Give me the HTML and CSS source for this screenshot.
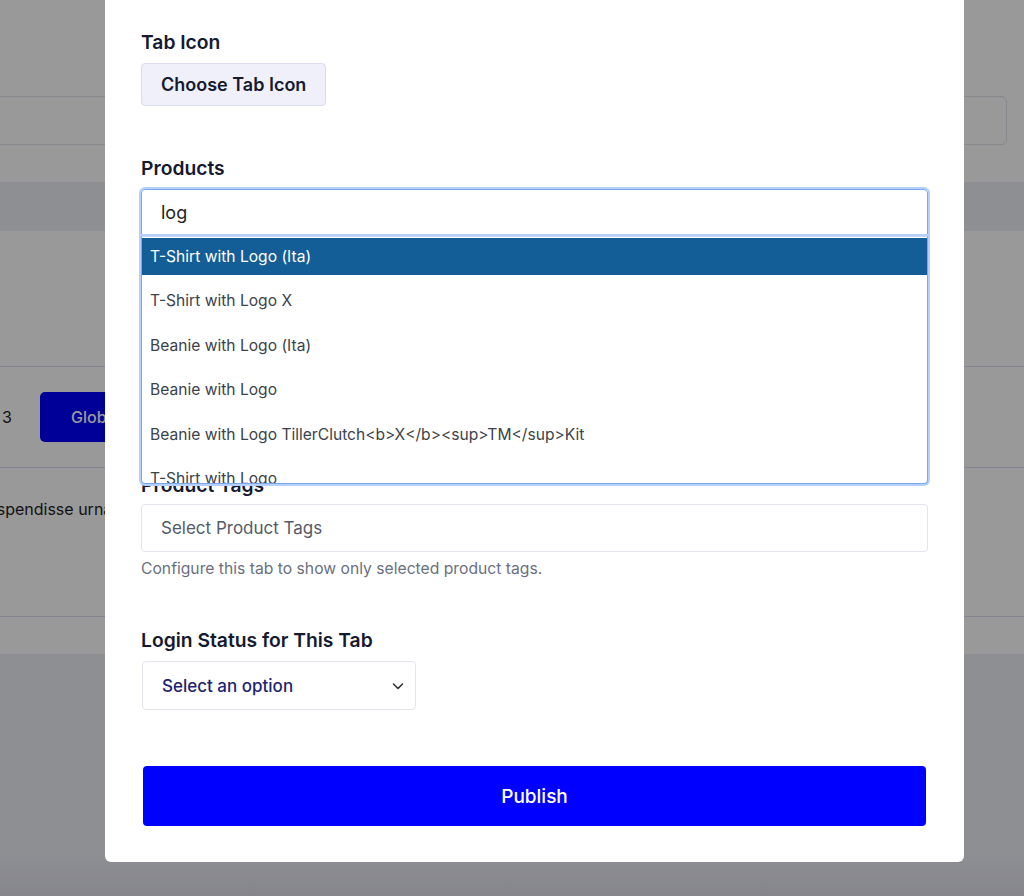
FILE: index.html
```html
<!DOCTYPE html>
<html>
<head>
<meta charset="utf-8">
<link rel="stylesheet" href="styles.css">
</head>
<body>
<div class="page">
  <div class="page-field"></div>
  <div class="page-band"></div>
  <div class="page-gap"></div>
  <div class="page-row">
    <span class="page-num">3</span>
    <span class="page-btn">Global</span>
  </div>
  <div class="page-text">Suspendisse urna nibh, viverra non, semper suscipit, posuere a, pede.</div>
  <div class="page-strip"></div>
  <div class="page-foot"></div>
</div>

<div class="overlay">
  <div class="modal">
    <div class="field">
      <div class="label">Tab Icon</div>
      <button class="icon-btn">Choose Tab Icon</button>
    </div>

    <div class="field field-products">
      <div class="label">Products</div>
      <div class="combo">
        <div class="search">log</div>
        <ul class="results">
          <li class="hl">T-Shirt with Logo (Ita)</li>
          <li>T-Shirt with Logo X</li>
          <li>Beanie with Logo (Ita)</li>
          <li>Beanie with Logo</li>
          <li>Beanie with Logo TillerClutch&lt;b&gt;X&lt;/b&gt;&lt;sup&gt;TM&lt;/sup&gt;Kit</li>
          <li>T-Shirt with Logo</li>
        </ul>
      </div>
    </div>

    <div class="field field-tags">
      <div class="label">Product Tags</div>
      <div class="input placeholder">Select Product Tags</div>
      <div class="help">Configure this tab to show only selected product tags.</div>
    </div>

    <div class="field field-login">
      <div class="label">Login Status for This Tab</div>
      <div class="select">
        <span>Select an option</span>
        <svg width="14" height="14" viewBox="0 0 14 14"><path d="M2.5 5 L7 9.5 L11.5 5" fill="none" stroke="#333" stroke-width="1.6" stroke-linecap="round" stroke-linejoin="round"/></svg>
      </div>
    </div>

    <button class="publish">Publish</button>
  </div>
</div>
</body>
</html>
```

FILE: styles.css
```css
* { box-sizing: border-box; }
html, body { margin: 0; padding: 0; }
body {
  width: 1024px;
  height: 896px;
  overflow: hidden;
  background: #ffffff;
  font-family: Inter, "Liberation Sans", sans-serif;
  position: relative;
}

/* background page */
.page { width: 1024px; padding-top: 96px; color: #222; }
.page-field {
  height: 49px;
  margin: 0 17px 0 -20px;
  border: 1px solid #e2e2ec;
  border-radius: 6px;
}
.page-band { height: 49px; margin-top: 37px; background: #edeef6; }
.page-gap { height: 136px; border-bottom: 1px solid #dddaf0; }
.page-row {
  height: 101px;
  display: flex;
  align-items: center;
  gap: 27px;
  border-bottom: 1px solid #dddaf0;
  margin-left: -11px;
}
.page-num { font-size: 16px; width: 23px; text-align: right; }
.page-btn {
  background: #0000ff;
  color: #fff;
  height: 50px;
  border-radius: 5px;
  padding: 0 31px;
  display: flex;
  align-items: center;
  font-size: 16px;
  font-weight: 500;
  margin-left: 1px;
}
.page-text {
  height: 149px;
  padding-top: 31px;
  font-size: 16px;
  margin-left: -23px;
  white-space: nowrap;
  border-bottom: 1px solid #dddaf0;
}
.page-strip { height: 37px; }
.page-foot { height: 260px; background: linear-gradient(#edeef6 0, #edeef6 200px, #d8d9e2 260px); }

/* overlay + modal */
.overlay {
  position: absolute;
  inset: 0;
  background: rgba(0, 0, 0, 0.4);
}
.modal {
  margin-left: 105px;
  margin-top: -10px;
  width: 859px;
  background: #fff;
  border-radius: 6px;
  padding: 40px 36px 36px;
  color: #141a33;
}
.label {
  font-size: 19.3px;
  line-height: 24px;
  font-weight: 600;
  color: #161a30;
}
.icon-btn {
  margin-top: 9px;
  height: 43px;
  padding: 0 19px;
  background: #eff0f9;
  border: 1px solid #dcdcf0;
  border-radius: 4px;
  font-family: inherit;
  font-size: 18px;
  font-weight: 600;
  color: #161a30;
}
.field-products { margin-top: 50px; }
.combo { margin-top: 9px; position: relative; }
.search {
  height: 47px;
  border: 1px solid #7ca6f2;
  border-radius: 4px 4px 0 0;
  box-shadow: 0 0 0 2px #b5d0fc;
  padding: 0 19px;
  display: flex;
  align-items: center;
  font-size: 18px;
  color: #222;
}
.results {
  position: absolute;
  left: 0;
  right: 0;
  top: 47px;
  height: 248px;
  margin: 0;
  padding: 1px 0 0;
  list-style: none;
  overflow: hidden;
  background: #fff;
  border: 1px solid #7ca6f2;
  border-top: 1px solid #c5dafd;
  border-radius: 0 0 4px 4px;
  box-shadow: 0 0 0 2px #b5d0fc;
  z-index: 2;
}
.results li {
  height: 37px;
  margin-bottom: 7.4px;
  padding: 0 8px;
  display: flex;
  align-items: center;
  font-size: 15.6px;
  color: #3c434a;
  white-space: nowrap;
}
.results li.hl { background: #135e96; color: #fff; }

.field-tags { margin-top: 237px; }
.input {
  margin-top: 7px;
  height: 48px;
  border: 1px solid #e4e4ee;
  border-radius: 4px;
  padding: 0 19px;
  display: flex;
  align-items: center;
  font-size: 17px;
}
.placeholder { color: #555a66; }
.help {
  margin-top: 7px;
  font-size: 15.7px;
  line-height: 20px;
  color: #6b7080;
}
.field-login { margin-top: 49px; }
.select {
  margin-top: 9px;
  margin-left: 1px;
  width: 274px;
  height: 49px;
  border: 1px solid #e4e4ee;
  border-radius: 4px;
  padding: 0 10px 0 19px;
  display: flex;
  align-items: center;
  justify-content: space-between;
  font-size: 17px;
  font-weight: 500;
  color: #1d2470;
}
.publish {
  display: block;
  margin: 56px 2px 0;
  width: calc(100% - 4px);
  height: 60px;
  background: #0000ff;
  border: none;
  border-radius: 4px;
  color: #fff;
  font-family: inherit;
  font-size: 19px;
  font-weight: 500;
}
```
